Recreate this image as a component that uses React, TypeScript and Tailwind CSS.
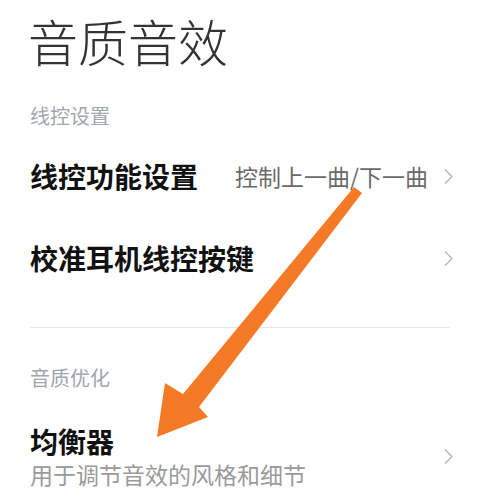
import React from "react";

const font = { fontFamily: '"Noto Sans CJK SC", "Noto Sans", sans-serif' };

function Chevron() {
  return (
    <svg width="11" height="17" viewBox="0 0 11 17" className="shrink-0">
      <path d="M2 1.5 L9 8.5 L2 15.5" fill="none" stroke="#b5b5b5" strokeWidth="1.3" />
    </svg>
  );
}

export default function App() {
  return (
    <div
      className="relative w-[480px] h-[503px] overflow-hidden bg-white px-[30px]"
      style={font}
    >
      <div className="h-[80px] flex items-center -ml-[2px]">
        <h1 className="text-[50px] leading-[60px] font-light text-[#333333]">音质音效</h1>
      </div>

      <div className="h-[72px] flex items-center">
        <span className="text-[20px] leading-[28px] text-[#a1a5ad]">线控设置</span>
      </div>

      <div className="h-[48px] flex items-center justify-between">
        <span className="text-[28px] leading-[36px] font-bold text-[#111111]">线控功能设置</span>
        <div className="flex items-center gap-[15px] -mr-[4px]">
          <span className="text-[23px] leading-[30px] text-[#6a6a6a]">控制上一曲/下一曲</span>
          <Chevron />
        </div>
      </div>

      <div className="h-[116px] flex items-center justify-between">
        <span className="text-[28px] leading-[36px] font-bold text-[#111111]">校准耳机线控按键</span>
        <div className="-mr-[4px]">
          <Chevron />
        </div>
      </div>

      <div className="mt-[11px] h-px bg-[#e6e6e6]" />

      <div className="h-[95px] pt-[5px] flex items-center">
        <span className="text-[20px] leading-[28px] text-[#a1a5ad]">音质优化</span>
      </div>

      <div className="flex items-center justify-between">
        <div className="flex flex-col">
          <span className="text-[28px] leading-[36px] font-bold text-[#111111]">均衡器</span>
          <span className="text-[23px] leading-[31px] text-[#9a9a9a]">用于调节音效的风格和细节</span>
        </div>
        <div className="-mr-[4px]">
          <Chevron />
        </div>
      </div>

      {/* annotation arrow laid over the list */}
      <svg
        className="absolute inset-0 pointer-events-none"
        width="480"
        height="503"
        viewBox="0 0 480 503"
      >
        <polygon
          points="354,187 362,193 199,407 208,417 157,437 165,383 183,394"
          fill="#f57a28"
        />
      </svg>
    </div>
  );
}
